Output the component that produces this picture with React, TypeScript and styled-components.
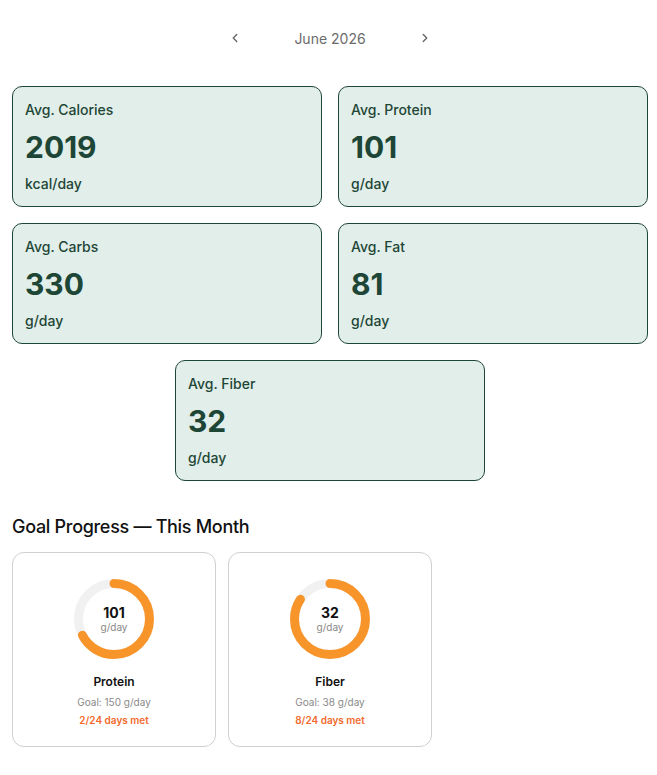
import React from "react";
import styled, { createGlobalStyle } from "styled-components";

const GlobalStyle = createGlobalStyle`
  body {
    margin: 0;
    background: #ffffff;
    font-family: Inter, "Noto Sans", sans-serif;
  }
`;

const Page = styled.div`
  width: 636px;
  padding: 0 0 20px 12px;
`;

const MonthBar = styled.div`
  display: flex;
  align-items: center;
  justify-content: center;
  height: 38px;
  margin-top: 19px;
  margin-bottom: 29px;
`;

const NavButton = styled.button`
  width: 24px;
  height: 24px;
  border: none;
  background: transparent;
  display: flex;
  align-items: center;
  justify-content: center;
  padding: 0;
  color: #666;
  cursor: pointer;
`;

const MonthLabel = styled.div`
  width: 166px;
  text-align: center;
  font-size: 14px;
  color: #6b6b6b;
`;

const StatGrid = styled.div`
  display: grid;
  grid-template-columns: 1fr 1fr;
  gap: 16px;
`;

const StatCard = styled.div<{ $centered?: boolean }>`
  box-sizing: border-box;
  height: 121px;
  background: #e1eee9;
  border: 1px solid #1e4636;
  border-radius: 10px;
  padding: 13px 12px;
  display: flex;
  flex-direction: column;
  color: #1e4636;
  ${(p) =>
    p.$centered &&
    `
    grid-column: 1 / span 2;
    justify-self: center;
    width: 310px;
  `}
`;

const StatLabel = styled.div`
  font-size: 14px;
  font-weight: 500;
  line-height: 20px;
`;

const StatValue = styled.div`
  font-size: 30px;
  font-weight: 700;
  line-height: 36px;
  margin-top: 9px;
`;

const StatUnit = styled.div`
  font-size: 14px;
  font-weight: 500;
  line-height: 20px;
  margin-top: 9px;
`;

const SectionTitle = styled.h2`
  margin: 34px 0 13px;
  font-size: 18px;
  font-weight: 500;
  letter-spacing: -0.3px;
  line-height: 24px;
  color: #111;
`;

const GoalRow = styled.div`
  display: flex;
  gap: 12px;
`;

const GoalCard = styled.div`
  box-sizing: border-box;
  width: 204px;
  height: 195px;
  border: 1px solid #d0d0d0;
  border-radius: 12px;
  display: flex;
  flex-direction: column;
  align-items: center;
  padding-top: 26px;
`;

const Ring = styled.div`
  position: relative;
  width: 80px;
  height: 80px;
`;

const RingCenter = styled.div`
  position: absolute;
  inset: 0;
  display: flex;
  flex-direction: column;
  align-items: center;
  justify-content: center;
`;

const RingValue = styled.div`
  font-size: 14px;
  font-weight: 700;
  line-height: 16px;
  color: #111;
`;

const RingUnit = styled.div`
  font-size: 10px;
  line-height: 12px;
  color: #888;
`;

const GoalName = styled.div`
  margin-top: 15px;
  font-size: 12px;
  font-weight: 600;
  line-height: 16px;
  color: #111;
`;

const GoalTarget = styled.div`
  margin-top: 5px;
  font-size: 10px;
  line-height: 14px;
  color: #8a8a8a;
`;

const GoalMet = styled.div`
  margin-top: 4px;
  font-size: 10px;
  font-weight: 600;
  line-height: 14px;
  color: #f26a2e;
`;

const Chevron = ({ dir }: { dir: "left" | "right" }) => (
  <svg width="14" height="14" viewBox="0 0 24 24" fill="none" stroke="currentColor" strokeWidth="2.4" strokeLinecap="round" strokeLinejoin="round">
    {dir === "left" ? <path d="M15 18l-6-6 6-6" /> : <path d="M9 18l6-6-6-6" />}
  </svg>
);

const Donut = ({ pct }: { pct: number }) => {
  const r = 35.5;
  const c = 2 * Math.PI * r;
  return (
    <svg width="80" height="80" viewBox="0 0 80 80">
      <circle cx="40" cy="40" r={r} fill="none" stroke="#f1f1f1" strokeWidth="9" />
      <circle
        cx="40"
        cy="40"
        r={r}
        fill="none"
        stroke="#f7942a"
        strokeWidth="9"
        strokeLinecap="round"
        strokeDasharray={`${c * pct} ${c}`}
        transform="rotate(-90 40 40)"
      />
    </svg>
  );
};

const stats = [
  { label: "Avg. Calories", value: 2019, unit: "kcal/day" },
  { label: "Avg. Protein", value: 101, unit: "g/day" },
  { label: "Avg. Carbs", value: 330, unit: "g/day" },
  { label: "Avg. Fat", value: 81, unit: "g/day" },
  { label: "Avg. Fiber", value: 32, unit: "g/day" },
];

const goals = [
  { name: "Protein", value: 101, goal: 150, met: 2 },
  { name: "Fiber", value: 32, goal: 38, met: 8 },
];

export default function App() {
  return (
    <>
      <GlobalStyle />
      <Page>
        <MonthBar>
          <NavButton aria-label="Previous month">
            <Chevron dir="left" />
          </NavButton>
          <MonthLabel>June 2026</MonthLabel>
          <NavButton aria-label="Next month">
            <Chevron dir="right" />
          </NavButton>
        </MonthBar>

        <StatGrid>
          {stats.map((s, i) => (
            <StatCard key={s.label} $centered={i === stats.length - 1 && stats.length % 2 === 1}>
              <StatLabel>{s.label}</StatLabel>
              <StatValue>{s.value}</StatValue>
              <StatUnit>{s.unit}</StatUnit>
            </StatCard>
          ))}
        </StatGrid>

        <SectionTitle>Goal Progress — This Month</SectionTitle>
        <GoalRow>
          {goals.map((g) => (
            <GoalCard key={g.name}>
              <Ring>
                <Donut pct={Math.min(g.value / g.goal, 1)} />
                <RingCenter>
                  <RingValue>{g.value}</RingValue>
                  <RingUnit>g/day</RingUnit>
                </RingCenter>
              </Ring>
              <GoalName>{g.name}</GoalName>
              <GoalTarget>Goal: {g.goal} g/day</GoalTarget>
              <GoalMet>{g.met}/24 days met</GoalMet>
            </GoalCard>
          ))}
        </GoalRow>
      </Page>
    </>
  );
}
